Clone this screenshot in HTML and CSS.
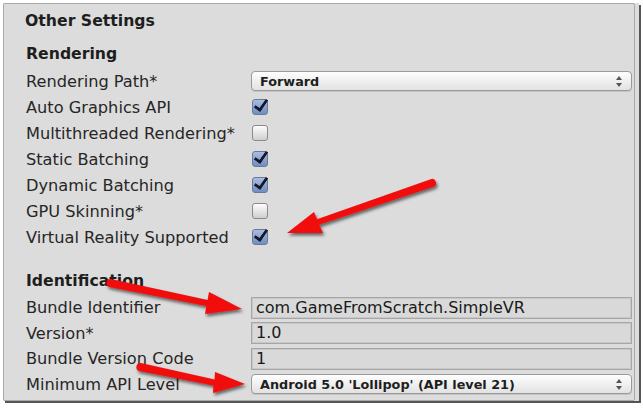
FILE: index.html
```html
<!DOCTYPE html>
<html>
<head>
<meta charset="utf-8">
<link rel="stylesheet" href="styles.css">
</head>
<body>
<div class="shot">
  <div class="panel">
    <div class="title">Other Settings</div>
    <div class="section">Rendering</div>
    <div class="rows">
      <div class="row"><span class="label">Rendering Path*</span><div class="popup"><span>Forward</span><span class="updown"></span></div></div>
      <div class="row"><span class="label">Auto Graphics API</span><span class="check on"></span></div>
      <div class="row"><span class="label">Multithreaded Rendering*</span><span class="check"></span></div>
      <div class="row"><span class="label">Static Batching</span><span class="check on"></span></div>
      <div class="row"><span class="label">Dynamic Batching</span><span class="check on"></span></div>
      <div class="row"><span class="label">GPU Skinning*</span><span class="check"></span></div>
      <div class="row"><span class="label">Virtual Reality Supported</span><span class="check on"></span></div>
    </div>
    <div class="section id">Identification</div>
    <div class="rows idrows">
      <div class="row"><span class="label">Bundle Identifier</span><div class="field">com.GameFromScratch.SimpleVR</div></div>
      <div class="row"><span class="label">Version*</span><div class="field">1.0</div></div>
      <div class="row"><span class="label">Bundle Version Code</span><div class="field">1</div></div>
      <div class="row"><span class="label">Minimum API Level</span><div class="popup"><span>Android 5.0 'Lollipop' (API level 21)</span><span class="updown"></span></div></div>
    </div>
  </div>
</div>
<svg class="arrows" width="643" height="409" viewBox="0 0 643 409">
  <defs>
    <filter id="sh" x="-20%" y="-50%" width="140%" height="200%">
      <feDropShadow dx="1.5" dy="2.5" stdDeviation="1.5" flood-color="#000" flood-opacity="0.55"/>
    </filter>
  </defs>
  <g fill="#f20a0a" filter="url(#sh)">
    <path d="M287,233 L314,212 L317,219.2 L430.7,179.2 A4,4 0 0,1 433.3,186.8 L319,224.8 L323,233 Z"/>
    <path d="M242,309 L209,292 L207.6,300.1 L110.8,279.1 A4,4 0 0,0 109.2,286.9 L206.4,305.9 L205,314 Z"/>
    <path d="M245,384 L215,372 L214.6,379.6 L140.8,363.1 A4,4 0 0,0 139.2,370.9 L213.4,385.4 L213,393 Z"/>
  </g>
</svg>
</body>
</html>
```
FILE: styles.css
```css
html, body {
  margin: 0;
  padding: 0;
  background: #ffffff;
}
body {
  width: 643px;
  height: 409px;
  overflow: hidden;
  position: relative;
  font-family: "DejaVu Sans", Verdana, sans-serif;
  color: #262626;
}
.shot {
  margin: 3px 0 0 3px;
  width: 632px;
  height: 398px;
  background: #dcdcdc;
  border-right: 4px solid #dcdcdc;
  box-shadow: 2px 2px 0 #555555;
}
.panel {
  box-sizing: border-box;
  width: 632px;
  height: 398px;
  border: 1px solid #a9a9a9;
  border-radius: 2px;
  padding: 6px 0 0 21px;
}
.title {
  font-weight: bold;
  font-size: 15.7px;
  height: 22px;
  line-height: 22px;
  color: #1e1e1e;
}
.section {
  font-weight: bold;
  font-size: 15.7px;
  height: 22px;
  line-height: 22px;
  margin-top: 11px;
  padding-left: 1px;
  color: #1e1e1e;
}
.section.id {
  margin-top: 20px;
}
.rows {
  margin-top: 3px;
}
.row {
  display: flex;
  align-items: center;
  height: 26px;
}
.idrows .row {
  height: 25.5px;
}
.label {
  width: 225px;
  flex: none;
  font-size: 16.2px;
  padding-left: 1px;
}
.check {
  box-sizing: border-box;
  width: 16px;
  height: 16px;
  margin-left: 1px;
  border: 1px solid #8a8a8a;
  border-radius: 3px;
  background: linear-gradient(#fdfdfd, #cfcfcf);
  position: relative;
}
.check.on {
  border-color: #6a7a96;
  background: linear-gradient(#a9bde0, #6f8ec3);
}
.check.on::after {
  content: "";
  position: absolute;
  left: 4px;
  top: -3px;
  width: 5px;
  height: 11px;
  border-right: 3px solid #15192a;
  border-bottom: 3px solid #15192a;
  transform: rotate(35deg);
  border-bottom-right-radius: 1px;
}
.popup {
  box-sizing: border-box;
  width: 381px;
  height: 20px;
  border: 1px solid #9a9a9a;
  border-radius: 4px;
  background: linear-gradient(#fefefe, #e2e2e2);
  display: flex;
  align-items: center;
  justify-content: space-between;
  padding: 0 8px 0 8px;
  font-size: 12.8px;
  font-weight: bold;
  color: #1e1e1e;
  box-shadow: 0 1px 0 #c4c4c4;
}
.updown {
  width: 7px;
  height: 11px;
  position: relative;
}
.updown::before, .updown::after {
  content: "";
  position: absolute;
  left: 0;
  border-left: 3.5px solid transparent;
  border-right: 3.5px solid transparent;
}
.updown::before {
  top: 0;
  border-bottom: 4px solid #555;
}
.updown::after {
  bottom: 0;
  border-top: 4px solid #555;
}
.field {
  box-sizing: border-box;
  width: 381px;
  height: 22px;
  border: 1px solid #a6a6a6;
  box-shadow: inset 0 0 0 1px #c8c8c8;
  background: #d9d9d9;
  font-size: 16px;
  line-height: 20px;
  padding-left: 4px;
  color: #1a1a1a;
}
.arrows {
  position: absolute;
  left: 0;
  top: 0;
  pointer-events: none;
}
```
